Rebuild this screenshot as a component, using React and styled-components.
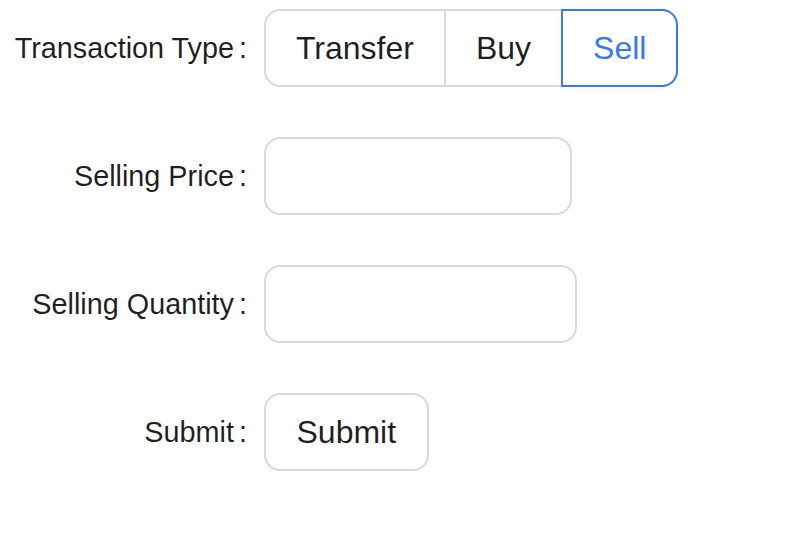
import styled, { createGlobalStyle } from "styled-components";

const GlobalStyle = createGlobalStyle`
  body {
    margin: 0;
    background: #ffffff;
    font-family: "Liberation Sans", Arial, sans-serif;
  }
`;

const Form = styled.form`
  display: flex;
  flex-direction: column;
  gap: 50px;
  padding-top: 9px;
`;

const Row = styled.div`
  display: grid;
  grid-template-columns: 264px auto;
  align-items: center;
`;

const Label = styled.label`
  display: flex;
  justify-content: flex-end;
  align-items: center;
  padding-top: 1px;
  font-size: 28.8px;
  color: rgba(0, 0, 0, 0.88);
  white-space: nowrap;

  &::after {
    content: ":";
    margin: 0 17px 0 5px;
  }
`;

const Control = styled.div`
  display: flex;
`;

const RadioGroup = styled.div`
  display: flex;
  height: 78px;
`;

const RadioButton = styled.button`
  box-sizing: border-box;
  height: 78px;
  padding: 0 30px;
  font-family: "Liberation Sans", Arial, sans-serif;
  font-size: 32px;
  background: #ffffff;
  color: ${(p) => (p.$active ? "#3478f6" : "rgba(0, 0, 0, 0.88)")};
  border: 2px solid ${(p) => (p.$active ? "#3478f6" : "#d9d9d9")};
  border-left-width: ${(p) => (p.$first ? "2px" : "0")};
  box-shadow: ${(p) => (p.$active ? "-2px 0 0 0 #3478f6" : "none")};
  position: relative;
  cursor: pointer;

  &:first-child {
    border-radius: 16px 0 0 16px;
  }
  &:last-child {
    border-radius: 0 16px 16px 0;
  }
`;

const Input = styled.input`
  box-sizing: border-box;
  width: ${(p) => p.$width}px;
  height: 78px;
  padding: 0 22px;
  font-family: "Liberation Sans", Arial, sans-serif;
  font-size: 32px;
  border: 2px solid #d9d9d9;
  border-radius: 16px;
  outline: none;
`;

const Button = styled.button`
  box-sizing: border-box;
  height: 78px;
  padding: 0 30.5px;
  font-family: "Liberation Sans", Arial, sans-serif;
  font-size: 32px;
  color: rgba(0, 0, 0, 0.88);
  background: #ffffff;
  border: 2px solid #d9d9d9;
  border-radius: 16px;
  box-shadow: 0 4px 0 rgba(0, 0, 0, 0.02);
  cursor: pointer;
`;

const types = ["Transfer", "Buy", "Sell"];

const App = () => {
  return (
    <>
      <GlobalStyle />
      <Form onSubmit={(e) => e.preventDefault()}>
        <Row>
          <Label>Transaction Type</Label>
          <Control>
            <RadioGroup>
              {types.map((t, i) => (
                <RadioButton
                  type="button"
                  key={t}
                  $first={i === 0}
                  $active={t === "Sell"}
                >
                  {t}
                </RadioButton>
              ))}
            </RadioGroup>
          </Control>
        </Row>
        <Row>
          <Label>Selling Price</Label>
          <Control>
            <Input $width={308} />
          </Control>
        </Row>
        <Row>
          <Label>Selling Quantity</Label>
          <Control>
            <Input $width={313} />
          </Control>
        </Row>
        <Row>
          <Label>Submit</Label>
          <Control>
            <Button type="submit">Submit</Button>
          </Control>
        </Row>
      </Form>
    </>
  );
};

export default App;
